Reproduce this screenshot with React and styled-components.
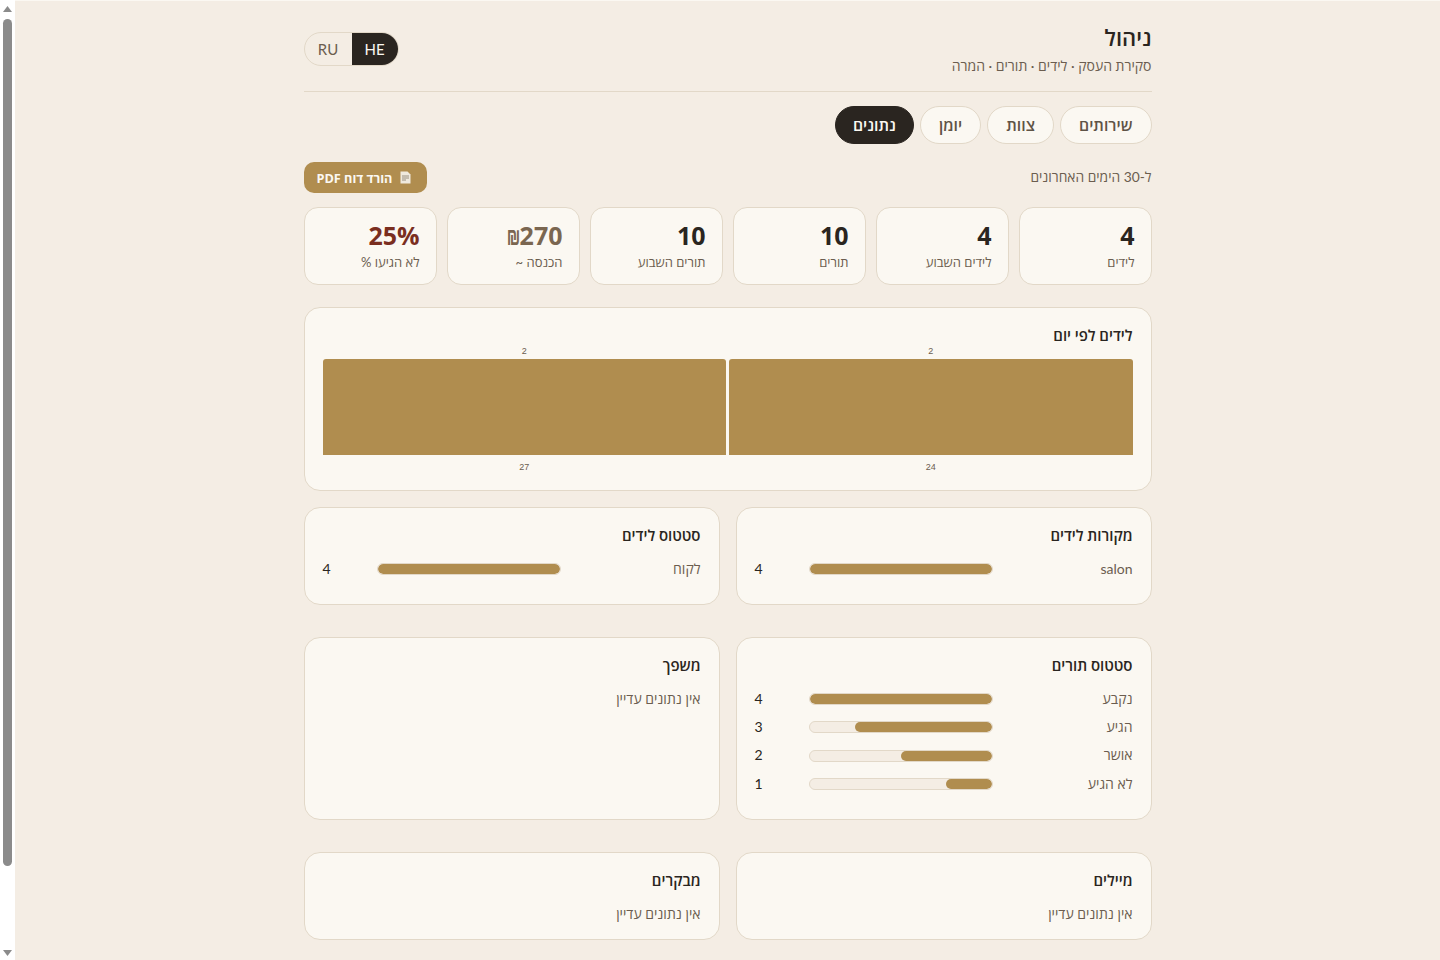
import React from 'react'
import styled, { createGlobalStyle } from 'styled-components'

const GlobalStyle = createGlobalStyle`
  html, body {
    height: 960px;
    margin: 0;
    overflow: hidden;
    background: #f4ede4;
  }
  * {
    box-sizing: border-box;
  }
`

const Shell = styled.div`
  display: flex;
  height: 960px;
  overflow: hidden;
  font-family: Lato, 'Open Sans', 'Noto Sans', sans-serif;
  color: #2a2520;
`

const ScrollTrack = styled.aside`
  flex: 0 0 15px;
  display: flex;
  flex-direction: column;
  align-items: center;
  justify-content: space-between;
  padding: 6px 0 4px;
  background: #fff;
`

const ScrollThumb = styled.div`
  width: 9px;
  height: 847px;
  margin-top: 7px;
  margin-bottom: auto;
  border-radius: 5px;
  background: #8b8b8b;
`

const Page = styled.main`
  flex: 1;
  border-top: 1px solid #fbf8f2;
`

const Container = styled.div`
  width: 848px;
  margin: 0 auto;
  padding-top: 22px;
`

const Header = styled.header`
  display: flex;
  justify-content: space-between;
  align-items: center;
  height: 69px;
  padding-bottom: 17px;
  border-bottom: 1px solid #e2d8c8;
`

const PageTitle = styled.h1`
  margin: 0 0 4px;
  font-size: 22px;
  line-height: 30px;
  font-weight: 600;
`

const Subtitle = styled.p`
  margin: 0;
  font-size: 14px;
  line-height: 18px;
  color: #6b5d4f;
`

const LangToggle = styled.div`
  display: flex;
  flex-direction: row-reverse;
  height: 34px;
  border: 1px solid #e2d8c8;
  border-radius: 17px;
  overflow: hidden;
`

const LangButton = styled.button`
  width: ${({ $active }) => ($active ? '46px' : '47px')};
  padding: 0;
  border: 0;
  font: inherit;
  font-size: 15px;
  color: ${({ $active }) => ($active ? '#fbf8f2' : '#6b5d4f')};
  background: ${({ $active }) => ($active ? '#2a2520' : 'transparent')};
`

const Tabs = styled.nav`
  display: flex;
  gap: 6px;
  margin-top: 14px;
`

const Tab = styled.button`
  height: 38px;
  padding: 0 ${({ $active }) => ($active ? '17px' : '18px')};
  border: 1px solid ${({ $active }) => ($active ? '#2a2520' : '#e2d8c8')};
  border-radius: 19px;
  font: inherit;
  font-size: 15.85px;
  font-weight: 600;
  color: ${({ $active }) => ($active ? '#fbf8f2' : '#5f5346')};
  background: ${({ $active }) => ($active ? '#2a2520' : '#fbf8f2')};
`

const Toolbar = styled.div`
  display: flex;
  justify-content: space-between;
  align-items: center;
  margin-top: 18px;
`

const Range = styled.span`
  margin-top: -2px;
  font-size: 13.8px;
  color: #6b5d4f;
`

const PdfButton = styled.button`
  display: flex;
  align-items: center;
  gap: 8px;
  height: 31px;
  padding: 0 16px 0 13px;
  border: 0;
  border-radius: 10px;
  font-family: 'Open Sans', sans-serif;
  font-size: 12.7px;
  font-weight: 700;
  color: #fbf8f2;
  background: #b08d4f;
`

const Stats = styled.div`
  display: grid;
  grid-template-columns: repeat(6, 1fr);
  gap: 10px;
  margin: 14px 0 22px;
`

const StatCard = styled.div`
  height: 78px;
  padding: 11px 16px;
  border: 1px solid #e2d8c8;
  border-radius: 14px;
  background: #fbf8f2;
`

const StatValue = styled.div`
  font-family: 'Open Sans', sans-serif;
  font-size: 25px;
  line-height: 32px;
  font-weight: 700;
  color: ${({ $color }) => $color || '#2a2520'};
`

const Shekel = styled.span`
  display: inline-block;
  margin-right: -1px;
  font-family: Inter, sans-serif;
  font-size: 17px;
  line-height: 1;
  font-weight: 600;
  transform: scale(0.86, 1.6);
  transform-origin: 50% 84%;
`

const StatLabel = styled.div`
  margin-top: 3px;
  font-size: 13px;
  line-height: 16px;
  color: #6b5d4f;
`

const Card = styled.section`
  margin-bottom: ${({ $spaced }) => ($spaced ? '16px' : '0')};
  padding: 18px;
  border: 1px solid #e2d8c8;
  border-radius: 16px;
  background: #fbf8f2;
`

const CardTitle = styled.h3`
  margin: 0 0 ${({ $tight }) => ($tight ? '1px' : '14px')};
  font-size: 15px;
  line-height: 19px;
  font-weight: 600;
`

const Chart = styled.div`
  display: flex;
  gap: 3px;
`

const ChartColumn = styled.div`
  flex: 1;
  text-align: center;
  font-family: 'Liberation Sans', sans-serif;
  font-size: 9px;
  color: #6b5d4f;
`

const ChartBar = styled.div`
  height: 96px;
  margin: 3px 0 7px;
  border-radius: 3px 3px 0 0;
  background: #b08d4f;
`

const CardGrid = styled.div`
  display: grid;
  grid-template-columns: 1fr 1fr;
  gap: 16px;
  margin-bottom: 32px;
`

const BarList = styled.div`
  display: flex;
  flex-direction: column;
  gap: 8px;
  margin-bottom: 6.5px;
`

const BarRow = styled.div`
  display: grid;
  grid-template-columns: 130px 1fr 44px;
  gap: 10px;
  align-items: center;
  font-size: 14px;
  line-height: 20.33px;
`

const BarLabel = styled.span`
  color: #6b5d4f;
`

const BarValue = styled.span`
  text-align: left;
`

const BarTrack = styled.div`
  height: 12px;
  border: 1px solid #e2d8c8;
  border-radius: 6px;
  background: #f4ede4;
  overflow: hidden;
`

const BarFill = styled.div`
  height: 100%;
  border-radius: 6px;
  background: #b08d4f;
`

const Empty = styled.p`
  margin: 0;
  padding-top: 3px;
  font-size: 14px;
  line-height: 14px;
  color: #6b5d4f;
`

const stats = [
  { value: '4', label: 'לידים' },
  { value: '4', label: 'לידים השבוע' },
  { value: '10', label: 'תורים' },
  { value: '10', label: 'תורים השבוע' },
  { value: '270', unit: '₪', label: 'הכנסה ~', color: '#7a6650' },
  { value: '25%', label: 'לא הגיעו %', color: '#7a2e1f' },
]

const grids = [
  [
    { title: 'מקורות לידים', rows: [['salon', 4]] },
    { title: 'סטטוס לידים', rows: [['לקוח', 4]] },
  ],
  [
    {
      title: 'סטטוס תורים',
      rows: [
        ['נקבע', 4],
        ['הגיע', 3],
        ['אושר', 2],
        ['לא הגיע', 1],
      ],
    },
    { title: 'משפך' },
  ],
  [{ title: 'מיילים' }, { title: 'מבקרים' }],
]

const DocIcon = () => (
  <svg width="11" height="13" viewBox="0 0 11 13">
    <path d="M0.5 0.5h7l3 3v9h-10z" fill="#efe9dd" />
    <path d="M2 5h7M2 7h7M2 9h4" stroke="#9a9080" strokeWidth="1" />
  </svg>
)

const Triangle = ({ down }) => (
  <svg width="9" height="6" viewBox="0 0 9 6">
    <path d={down ? 'M0 0h9L4.5 6z' : 'M0 6h9L4.5 0z'} fill="#8b8b8b" />
  </svg>
)

const Panel = ({ title, rows }) => (
  <Card>
    <CardTitle>{title}</CardTitle>
    {rows ? (
      <BarList>
        {rows.map(([label, value]) => (
          <BarRow key={label}>
            <BarLabel>{label}</BarLabel>
            <BarTrack>
              <BarFill style={{ width: `${(value / rows[0][1]) * 100}%` }} />
            </BarTrack>
            <BarValue>{value}</BarValue>
          </BarRow>
        ))}
      </BarList>
    ) : (
      <Empty>אין נתונים עדיין</Empty>
    )}
  </Card>
)

const App = () => (
  <Shell>
    <GlobalStyle />
    <ScrollTrack>
      <Triangle />
      <ScrollThumb />
      <Triangle down />
    </ScrollTrack>
    <Page dir="rtl">
      <Container>
        <Header>
          <div>
            <PageTitle>ניהול</PageTitle>
            <Subtitle>סקירת העסק · לידים · תורים · המרה</Subtitle>
          </div>
          <LangToggle>
            <LangButton>RU</LangButton>
            <LangButton $active>HE</LangButton>
          </LangToggle>
        </Header>
        <Tabs>
          <Tab>שירותים</Tab>
          <Tab>צוות</Tab>
          <Tab>יומן</Tab>
          <Tab $active>נתונים</Tab>
        </Tabs>
        <Toolbar>
          <Range>ל-30 הימים האחרונים</Range>
          <PdfButton>
            <DocIcon />
            הורד דוח PDF
          </PdfButton>
        </Toolbar>
        <Stats>
          {stats.map((stat) => (
            <StatCard key={stat.label}>
              <StatValue $color={stat.color}>
                <bdi dir="ltr">
                  {stat.unit && <Shekel>{stat.unit}</Shekel>}
                  {stat.value}
                </bdi>
              </StatValue>
              <StatLabel>{stat.label}</StatLabel>
            </StatCard>
          ))}
        </Stats>
        <Card $spaced>
          <CardTitle $tight>לידים לפי יום</CardTitle>
          <Chart>
            {[
              [2, 24],
              [2, 27],
            ].map(([count, day]) => (
              <ChartColumn key={day}>
                {count}
                <ChartBar />
                {day}
              </ChartColumn>
            ))}
          </Chart>
        </Card>
        {grids.map((panels) => (
          <CardGrid key={panels[0].title}>
            {panels.map((panel) => (
              <Panel key={panel.title} {...panel} />
            ))}
          </CardGrid>
        ))}
      </Container>
    </Page>
  </Shell>
)

export default App
